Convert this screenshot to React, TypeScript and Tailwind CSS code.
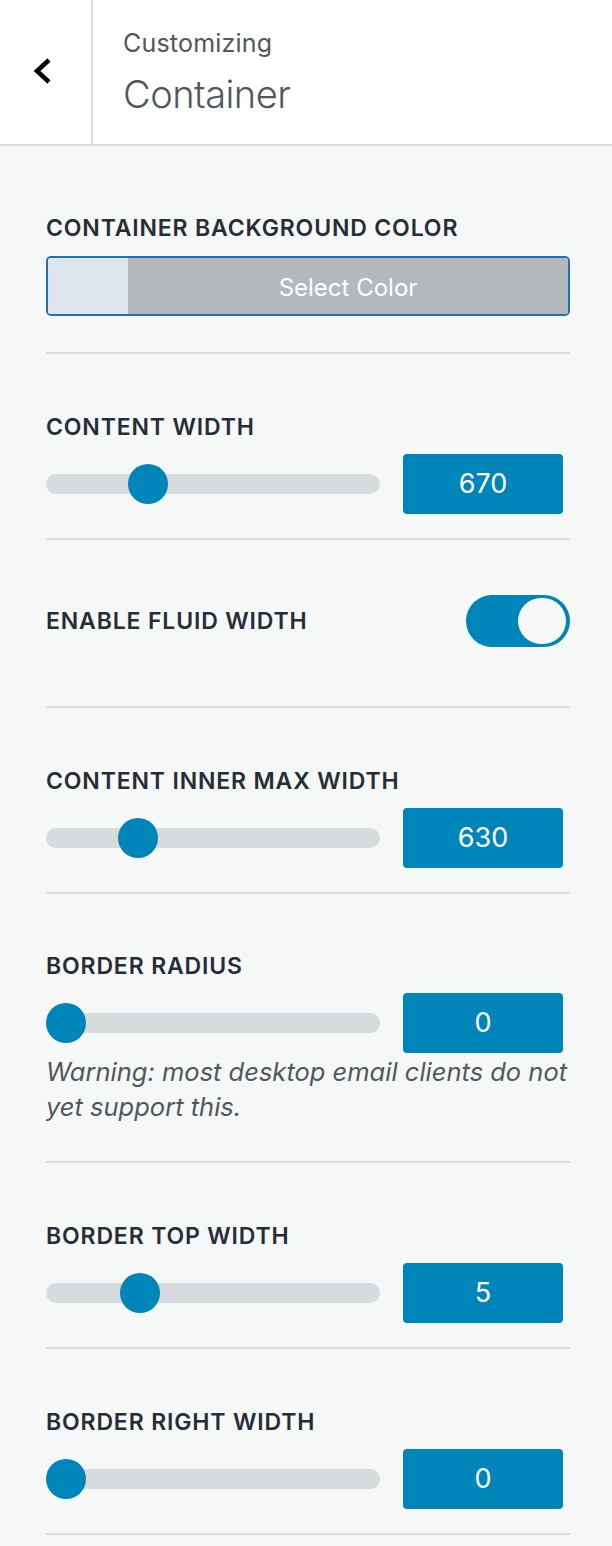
import React from "react";

const font = { fontFamily: "Inter, 'Noto Sans', sans-serif" };

function Label({ children }: { children: React.ReactNode }) {
  return (
    <div className="text-[23px] leading-[30px] font-semibold tracking-[0.85px] text-[#272d37] uppercase">
      {children}
    </div>
  );
}

function Slider({ value, thumb }: { value: string; thumb: number }) {
  return (
    <div className="mt-[12px] flex items-center justify-between pr-[7px]">
      <div className="relative h-[20px] w-[334px] rounded-full bg-[#d7dbde]">
        <div
          className="absolute top-1/2 h-[40px] w-[40px] -translate-y-1/2 rounded-full bg-[#0085ba]"
          style={{ left: thumb }}
        />
      </div>
      <div className="flex h-[60px] w-[160px] items-center justify-center rounded-[4px] bg-[#0085ba] text-[27px] text-white">
        {value}
      </div>
    </div>
  );
}

function Section({
  children,
  className = "",
}: {
  children: React.ReactNode;
  className?: string;
}) {
  return <div className={`border-b-2 border-[#dcdcde] ${className}`}>{children}</div>;
}

export default function App() {
  return (
    <div className="min-h-[1546px] w-[612px] bg-[#f6f7f7]" style={font}>
      {/* Header */}
      <header className="flex h-[146px] border-b-2 border-[#dcdcde] bg-white">
        <div className="flex w-[93px] shrink-0 items-center justify-center border-r-2 border-[#dcdcde]">
          <svg width="30" height="30" viewBox="0 0 30 30" className="-ml-[4px] -mt-[2px]">
            <polyline
              points="20,4 8,15 20,26"
              fill="none"
              stroke="#000"
              strokeWidth="4.5"
              strokeLinecap="butt"
              strokeLinejoin="miter"
            />
          </svg>
        </div>
        <div className="pl-[30px] pt-[28px]">
          <div className="text-[25px] leading-[30px] tracking-[0.2px] text-[#50575e]">Customizing</div>
          <div className="mt-[12px] text-[38px] leading-[48px] font-light tracking-[-0.5px] text-[#50575e]">
            Container
          </div>
        </div>
      </header>

      <div className="pl-[46px] pr-[42px]">
        {/* Background color */}
        <Section className="pt-[67px] pb-[36px]">
          <Label>Container Background Color</Label>
          <div className="mt-[13px] flex h-[60px] overflow-hidden rounded-[5px] border-2 border-[#2271b1]">
            <div className="w-[80px] bg-[#dfe5ed]" />
            <div className="flex flex-1 items-center justify-center bg-[#b4b8bc] pt-[3px] text-[24px] text-white">
              Select Color
            </div>
          </div>
        </Section>

        <Section className="pt-[58px] pb-[24px]">
          <Label>Content Width</Label>
          <Slider value="670" thumb={82} />
        </Section>

        <Section className="pt-[55px] pb-[59px]">
          <div className="flex items-center justify-between">
            <Label>Enable Fluid Width</Label>
            <div className="flex h-[52px] w-[104px] items-center justify-end rounded-full bg-[#0085ba] pr-[4px]">
              <div className="h-[46px] w-[48px] rounded-full bg-[#f6f7f7]" />
            </div>
          </div>
        </Section>

        <Section className="pt-[58px] pb-[24px]">
          <Label>Content Inner Max Width</Label>
          <Slider value="630" thumb={72} />
        </Section>

        <Section className="pt-[57px] pb-[37px]">
          <Label>Border Radius</Label>
          <Slider value="0" thumb={0} />
          <p className="mt-[1px] text-[25.5px] leading-[35px] italic text-[#50575e]">
            Warning: most desktop email clients do not yet support this.
          </p>
        </Section>

        <Section className="pt-[58px] pb-[24px]">
          <Label>Border Top Width</Label>
          <Slider value="5" thumb={74} />
        </Section>

        <Section className="pt-[58px] pb-[24px]">
          <Label>Border Right Width</Label>
          <Slider value="0" thumb={0} />
        </Section>
      </div>
    </div>
  );
}
